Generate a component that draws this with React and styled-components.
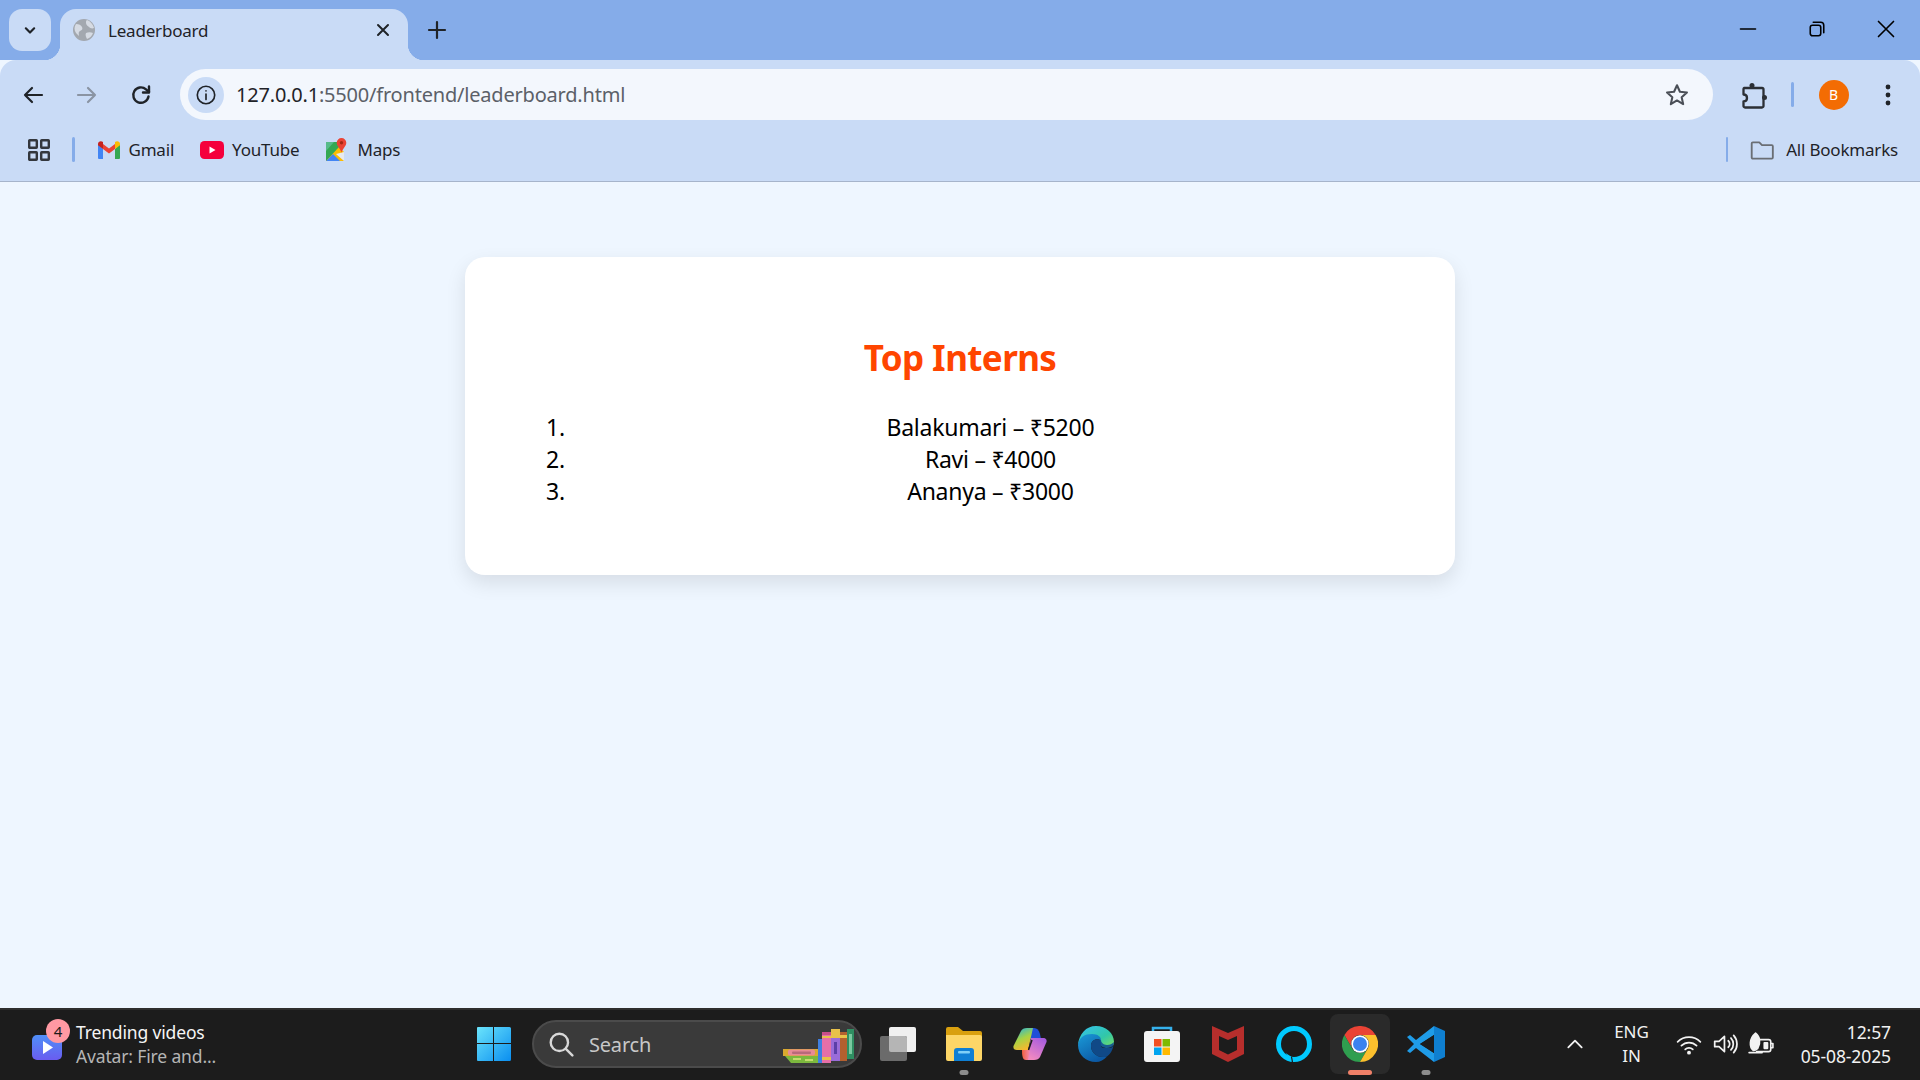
import React from "react";
import styled, { createGlobalStyle } from "styled-components";

const Global = createGlobalStyle`
  html, body { margin: 0; padding: 0; }
  body { font-family: "Noto Sans", "Open Sans", sans-serif; }
`;

const Screen = styled.div`
  width: 1920px;
  height: 1080px;
  display: flex;
  flex-direction: column;
  overflow: hidden;
  background: #eef6ff;
`;

const TabStrip = styled.div`
  height: 60px;
  flex: none;
  background: #85ace9;
  display: flex;
  align-items: flex-end;
  padding-left: 9px;
`;

const TabMenu = styled.div`
  width: 42px;
  height: 42px;
  margin-bottom: 9px;
  border-radius: 13px;
  background: #c9dbf6;
  display: flex;
  align-items: center;
  justify-content: center;
`;

const Tab = styled.div`
  position: relative;
  width: 348px;
  height: 51px;
  margin-left: 9px;
  box-sizing: border-box;
  padding: 0 15px 9px 13px;
  background: #c9dbf6;
  border-radius: 16px 16px 0 0;
  display: flex;
  align-items: center;
  &::before, &::after {
    content: "";
    position: absolute;
    bottom: 0;
    width: 16px;
    height: 16px;
  }
  &::before {
    left: -16px;
    background: radial-gradient(circle at 0 0, transparent 16px, #c9dbf6 16.5px);
  }
  &::after {
    right: -16px;
    background: radial-gradient(circle at 100% 0, transparent 16px, #c9dbf6 16.5px);
  }
`;

const TabTitle = styled.span`
  flex: 1;
  margin-left: 13px;
  padding-top: 1px;
  font-size: 17px;
  letter-spacing: -0.2px;
  color: #1f2328;
`;

const NewTab = styled.div`
  margin: 0 0 18px 17px;
  height: 24px;
  display: flex;
`;

const WindowControls = styled.div`
  margin-left: auto;
  height: 60px;
  display: flex;
  align-items: center;
  padding: 0 25px 0 0;
  gap: 51px;
  svg { margin-bottom: 2px; }
`;

const Toolbar = styled.div`
  height: 60px;
  flex: none;
  box-sizing: border-box;
  background: #c9dbf6;
  border-radius: 16px 16px 0 0;
  display: flex;
  align-items: flex-start;
  padding: 9px 0 0 21px;
`;

const NavButton = styled.div`
  width: 24px;
  height: 51px;
  margin-right: 30px;
  display: flex;
  align-items: center;
  justify-content: center;
  &:nth-child(3) { margin-right: 27px; }
`;

const Omnibox = styled.div`
  width: 1533px;
  height: 51px;
  box-sizing: border-box;
  border-radius: 26px;
  background: #f3f7fd;
  display: flex;
  align-items: center;
  padding: 0 23px 0 8px;
`;

const InfoChip = styled.div`
  width: 36px;
  height: 36px;
  border-radius: 50%;
  background: #c9dbf6;
  display: flex;
  align-items: center;
  justify-content: center;
`;

const Url = styled.div`
  flex: 1;
  margin-left: 12px;
  font-size: 20px;
  letter-spacing: -0.2px;
  color: #5b6068;
  span { color: #1f2328; }
`;

const ToolbarEnd = styled.div`
  height: 51px;
  display: flex;
  align-items: center;
  margin-left: 26px;
`;

const Spacer = styled.div`
  width: ${({ $w }) => $w}px;
  flex: none;
`;

const Divider = styled.div`
  width: 2.5px;
  height: ${({ $h }) => $h}px;
  border-radius: 2px;
  background: #85ace9;
`;

const Avatar = styled.div`
  width: 30px;
  height: 30px;
  margin: 0 36px 0 25px;
  border-radius: 50%;
  background: #f36c03;
  color: #fff;
  font-size: 14px;
  display: flex;
  align-items: center;
  justify-content: center;
`;

const BookmarkBar = styled.div`
  height: 62px;
  flex: none;
  box-sizing: border-box;
  background: #c9dbf6;
  border-bottom: 1px solid #a6b4cb;
  display: flex;
  align-items: center;
  padding: 0 22px 2px 28px;
`;

const Bookmark = styled.div`
  display: flex;
  align-items: center;
  gap: ${({ $gap }) => $gap}px;
  margin-left: ${({ $left }) => $left}px;
  font-size: 17px;
  letter-spacing: -0.2px;
  color: #1f2328;
`;

const Page = styled.main`
  flex: 1;
  display: flex;
  flex-direction: column;
  align-items: center;
  padding-top: 75px;
  background: #eef6ff;
`;

const Card = styled.section`
  width: 990px;
  height: 318px;
  box-sizing: border-box;
  padding: 77px 39px 0 81px;
  background: #fff;
  border-radius: 20px;
  box-shadow: 0 8px 20px rgba(0, 0, 0, 0.1);
`;

const Title = styled.h2`
  margin: 0 0 29px -42px;
  height: 48px;
  line-height: 48px;
  text-align: center;
  font-size: 35px;
  font-weight: 700;
  letter-spacing: -0.6px;
  color: #ff4500;
`;

const List = styled.ol`
  margin: 0;
  padding: 0;
  list-style: none;
  counter-reset: rank;
`;

const Row = styled.li`
  counter-increment: rank;
  display: flex;
  height: 32px;
  line-height: 32px;
  font-size: 23px;
  letter-spacing: -0.25px;
  color: #000;
  &::before { content: counter(rank) "."; }
`;

const RowText = styled.span`
  flex: 1;
  text-align: center;
`;

const Taskbar = styled.footer`
  height: 72px;
  flex: none;
  box-sizing: border-box;
  background: #1c1c1c;
  border-top: 2px solid #2e2e2e;
  padding-bottom: 2px;
  display: flex;
  align-items: center;
`;

const Widget = styled.div`
  position: relative;
  width: 461px;
  height: 100%;
  flex: none;
  box-sizing: border-box;
  padding-left: 32px;
  display: flex;
  align-items: center;
`;

const WidgetBadge = styled.div`
  position: absolute;
  left: 46px;
  top: 9px;
  width: 24px;
  height: 24px;
  border-radius: 50%;
  background: #ff99a3;
  color: #1a1a1a;
  font-size: 15px;
  display: flex;
  align-items: center;
  justify-content: center;
`;

const WidgetText = styled.div`
  margin-left: 14px;
  font-size: 17.5px;
  line-height: 24px;
  letter-spacing: -0.15px;
  color: #f5f5f5;
  div + div { color: #b5b5b5; }
`;

const Slot = styled.div`
  position: relative;
  width: 66px;
  height: 60px;
  flex: none;
  display: flex;
  align-items: center;
  justify-content: center;
  border-radius: 8px;
  box-sizing: border-box;
  background: ${({ $active }) => ($active ? "#2a2a2a" : "transparent")};
  ${({ $active }) => ($active ? "width: 60px; margin: 0 3px;" : "")}
`;

const RunDot = styled.span`
  position: absolute;
  bottom: -1px;
  left: 50%;
  transform: translateX(-50%);
  width: ${({ $active }) => ($active ? 24 : 9)}px;
  height: 5px;
  border-radius: 3px;
  background: ${({ $active }) => ($active ? "#f08068" : "#8c8c8c")};
`;

const SearchPill = styled.div`
  width: 330px;
  height: 48px;
  flex: none;
  margin: 0 2.5px 0 5px;
  box-sizing: border-box;
  border-radius: 24px;
  border: 2px solid #4b4b4b;
  background: #3a3a3a;
  display: flex;
  align-items: center;
  padding-left: 14px;
  overflow: hidden;
  color: #c8c8c8;
  font-size: 20px;
  letter-spacing: -0.2px;
`;

const SearchLabel = styled.span`
  margin-left: 15px;
  flex: 1;
`;

const Tray = styled.div`
  flex: 1;
  height: 100%;
  display: flex;
  align-items: center;
  color: #f2f2f2;
  padding-left: 106px;
`;

const Lang = styled.div`
  width: 60px;
  margin-left: 17px;
  text-align: center;
  font-size: 17px;
  line-height: 24px;
`;

const TrayIcons = styled.div`
  display: flex;
  align-items: center;
  gap: 10px;
  margin-left: 14px;
`;

const Clock = styled.div`
  margin-left: auto;
  margin-right: 29px;
  text-align: right;
  font-size: 17.5px;
  line-height: 24px;
  letter-spacing: -0.1px;
`;

const Stroke = ({ size = 24, color = "#1f2328", width = 2, children }) => (
  <svg width={size} height={size} viewBox="0 0 24 24" fill="none" stroke={color} strokeWidth={width} strokeLinecap="round" strokeLinejoin="round">
    {children}
  </svg>
);

const Gmail = () => (
  <svg width="24" height="20" viewBox="0 0 24 20">
    <path d="M1 4v14a1 1 0 0 0 1 1h4V9z" fill="#4285f4" />
    <path d="M23 4v14a1 1 0 0 1-1 1h-4V9z" fill="#34a853" />
    <path d="M6 9v-5l6 4.6 6-4.6v5l-6 4.6z" fill="#ea4335" />
    <path d="M1 4c0-2.6 3-3.6 5-2v7L1 5.2z" fill="#c5221f" />
    <path d="M23 4c0-2.6-3-3.6-5-2v7l5-3.8z" fill="#fbbc04" />
  </svg>
);

const YouTube = () => (
  <svg width="24" height="18" viewBox="0 0 24 18">
    <rect width="24" height="18" rx="4.5" fill="#f5003c" />
    <path d="M9.5 5.5v7l6-3.5z" fill="#fff" />
  </svg>
);

const Maps = () => (
  <svg width="22" height="24" viewBox="0 0 22 24">
    <path d="M1 4h13v19H1z" fill="#34a853" />
    <path d="M1 23 14 9l5 5v9z" fill="#fbbc04" />
    <path d="M1 23 8 16l7 7z" fill="#4285f4" />
    <path d="M11 16l8 7V14z" fill="#e8eaed" />
    <path d="M1 4h8L1 13z" fill="#57bb8a" />
    <path d="M16.5 0a4.8 4.8 0 0 1 4.8 4.8c0 3.4-3.8 5.8-4.8 10-1-4.200-4.800-6.600-4.800-10A4.800 4.800 0 0 1 16.500 0z" fill="#ea4335" />
    <circle cx="16.500" cy="4.800" r="1.700" fill="#a52714" />
  </svg>
);

const WinLogo = () => (
  <svg width="36" height="36" viewBox="0 0 36 36">
    <defs>
      <linearGradient id="winGrad" x1="0" y1="0" x2="1" y2="1">
        <stop offset="0" stopColor="#6be4fb" />
        <stop offset="1" stopColor="#0a8ef0" />
      </linearGradient>
    </defs>
    <path d="M1 2a1 1 0 0 1 1-1h15v16H1zM18 1h15.500a1.500 1.500 0 0 1 1.500 1.500V17H18zM1 18h16v17H2a1 1 0 0 1-1-1zM18 18h17v15.500a1.500 1.500 0 0 1-1.500 1.500H18z" fill="url(#winGrad)" />
  </svg>
);

const Books = () => (
  <svg width="74" height="34" viewBox="0 0 74 34" style={{ flex: "none", marginRight: 3, marginTop: 3 }}>
    <rect x="0" y="20" width="35" height="7" fill="#d9a92f" />
    <rect x="5" y="20.500" width="27" height="6" rx="2" fill="#e88a96" />
    <rect x="9" y="22.500" width="19" height="2.500" rx="1" fill="#b9697a" />
    <path d="M2 27h33v7H8z" fill="#7cb83e" />
    <path d="M10 29h8v2h-8zM22 30h8v2h-8z" fill="#c3dc6e" />
    <rect x="35" y="10" width="4" height="24" fill="#3f7fe0" />
    <rect x="39" y="3" width="9" height="31" fill="#e56fa8" />
    <rect x="39" y="3" width="9" height="3" fill="#c94f88" />
    <rect x="39" y="7" width="9" height="2" fill="#e8c14a" />
    <rect x="39" y="28" width="9" height="3" fill="#e8c14a" />
    <rect x="48" y="0" width="9" height="32" fill="#9a6cd8" />
    <rect x="48" y="0" width="9" height="9" fill="#e8c14a" />
    <rect x="51" y="13" width="3" height="12" fill="#5b3fa8" />
    <rect x="57" y="3" width="7" height="29" fill="#b3602f" />
    <rect x="57" y="6" width="7" height="3" fill="#e8c14a" />
    <rect x="64" y="0" width="7" height="30" fill="#2f8f62" />
    <rect x="66" y="5" width="3" height="20" fill="#7bc8a0" />
  </svg>
);

const TaskView = () => (
  <svg width="36" height="36" viewBox="0 0 36 36">
    <rect x="9" y="1" width="27" height="25" rx="2" fill="#f0f0f0" />
    <rect x="0" y="10" width="27" height="25" rx="2" fill="#6b6b6b" />
    <path d="M9 10h16a2 2 0 0 1 2 2v14H11a2 2 0 0 1-2-2z" fill="#b5b5b5" />
  </svg>
);

const Explorer = () => (
  <svg width="36" height="36" viewBox="0 0 36 36">
    <path d="M0 3a2 2 0 0 1 2-2h10l5 4h17a2 2 0 0 1 2 2v4H0z" fill="#d9a00f" />
    <path d="M0 9h34a2 2 0 0 1 2 2v22a2 2 0 0 1-2 2H2a2 2 0 0 1-2-2z" fill="#fdd667" />
    <path d="M8 25a3 3 0 0 1 3-3h14a3 3 0 0 1 3 3v10H8z" fill="#0f7fd4" />
    <rect x="12" y="25" width="12" height="2.500" rx="1" fill="#7fd0f7" />
  </svg>
);

const Copilot = () => (
  <svg width="34" height="32" viewBox="0 0 34 32">
    <defs>
      <linearGradient id="copA" x1="0.2" y1="0" x2="0.6" y2="1">
        <stop offset="0" stopColor="#2bb5d6" />
        <stop offset="0.5" stopColor="#a7d344" />
        <stop offset="1" stopColor="#fbb62e" />
      </linearGradient>
      <linearGradient id="copB" x1="0.8" y1="0" x2="0.3" y2="1">
        <stop offset="0" stopColor="#a65be0" />
        <stop offset="1" stopColor="#f28ac0" />
      </linearGradient>
      <linearGradient id="copC" x1="0" y1="0" x2="1" y2="0">
        <stop offset="0" stopColor="#f2603f" />
        <stop offset="1" stopColor="#f48ab0" />
      </linearGradient>
    </defs>
    <path d="M15 0h6c3 0 5 2 6 6l1 5H17z" fill="#1f4fd8" />
    <path d="M8 3c1-2 3-3 6-3h6l-5 22H4c-3 0-4-2-3.500-4z" fill="url(#copA)" />
    <path d="M18 10h12c3 0 4 2 3.500 4L27 29c-1 2-3 3-6 3h-7z" fill="url(#copB)" />
    <path d="M9 22h8l-2 10h-2c-3 0-4-3-4-10z" fill="url(#copC)" />
    <path d="M19 12l-3.500 10" stroke="#1c1c1c" strokeWidth="1.500" fill="none" />
  </svg>
);

const Edge = () => (
  <svg width="36" height="36" viewBox="0 0 36 36">
    <defs>
      <linearGradient id="edgeA" x1="0" y1="0" x2="1" y2="1">
        <stop offset="0" stopColor="#35c1f1" />
        <stop offset="0.6" stopColor="#31c7a8" />
        <stop offset="1" stopColor="#7fe05a" />
      </linearGradient>
      <linearGradient id="edgeB" x1="0" y1="0" x2="0.6" y2="1">
        <stop offset="0" stopColor="#1a9ad8" />
        <stop offset="1" stopColor="#0c59a4" />
      </linearGradient>
    </defs>
    <path d="M18 0c10 0 18 7 18 16 0 4-3 6-7 6-3 0-6-1-6-3 0-5-2-9-8-9-7 0-13 4-15 9C1 8 8 0 18 0z" fill="url(#edgeA)" />
    <path d="M0 19C1 11 7 8 14 8c6 0 9 3 9 6-5-2-10 0-10 6 0 6 5 11 12 11 2 0 3 0 4-.500C26 34 22 36 18 36 8 36 0 29 0 19z" fill="url(#edgeB)" />
    <path d="M13 20c0-6 5-8 10-6 0 2 2 5 6 5 3 0 5-1 7-3-1 9-4 12-7 14.500-1 .500-2 .500-4 .500-7 0-12-5-12-11z" fill="#0f4f94" opacity="0.9" />
    <path d="M23 19c0 2 3 3 6 3 3 0 5-1 6.500-3-.500 1-2 3-3.500 3h-6c-2 0-3-1-3-3z" fill="#1c1c1c" />
  </svg>
);

const Store = () => (
  <svg width="36" height="36" viewBox="0 0 36 36">
    <path d="M9 6V2h18v4" fill="none" stroke="#35b1ec" strokeWidth="2.500" />
    <rect x="0" y="5" width="36" height="31" rx="3" fill="#f4f4f4" />
    <rect x="10" y="13" width="7.500" height="7.500" fill="#f25022" />
    <rect x="18.500" y="13" width="7.500" height="7.500" fill="#7fba00" />
    <rect x="10" y="21.500" width="7.500" height="7.500" fill="#00a4ef" />
    <rect x="18.500" y="21.500" width="7.500" height="7.500" fill="#ffb900" />
  </svg>
);

const McAfee = () => (
  <svg width="32" height="36" viewBox="0 0 32 36">
    <path d="M0 0l16 7 16-7v28l-16 8-16-8zM7 10v14l9 4.500 9-4.500V10l-9 4z" fill="#b72e2c" fillRule="evenodd" />
  </svg>
);

const Alexa = () => (
  <svg width="36" height="36" viewBox="0 0 36 36">
    <circle cx="18" cy="18" r="15.500" fill="none" stroke="#00caff" strokeWidth="5" />
    <path d="M15 36v-5.500l-5.500-3.500 3 5z" fill="#00caff" />
    <path d="M15.500 31l1 5" stroke="#1c1c1c" strokeWidth="1.200" />
  </svg>
);

const Chrome = () => (
  <svg width="36" height="36" viewBox="0 0 36 36">
    <path d="M18 9H33.600A18 18 0 0 0 2.400 9L10.200 22.500A9 9 0 0 1 18 9z" fill="#ea4335" />
    <path d="M2.400 9A18 18 0 0 0 18 36L25.800 22.500A9 9 0 0 1 10.200 22.500z" fill="#2f9e4f" />
    <path d="M33.600 9H18A9 9 0 0 1 25.800 22.500L18 36A18 18 0 0 0 33.600 9z" fill="#fbc02d" />
    <circle cx="18" cy="18" r="8.700" fill="#fff" />
    <circle cx="18" cy="18" r="7" fill="#3b82f0" />
  </svg>
);

const VSCode = () => (
  <svg width="38" height="36" viewBox="0 0 38 36">
    <path d="M27 0l11 5v26l-11 5z" fill="#0f7fd0" />
    <path d="M27 0v9L13 18l14 9v9L9 22l-6 5-3-2 7-7-7-7 3-2 6 5z" fill="#1f9ce8" />
    <path d="M27 9v18l-14-9z" fill="#1c1c1c" />
  </svg>
);

function App() {
  return (
    <Screen>
      <Global />
      <TabStrip>
        <TabMenu>
          <Stroke size={20} width={2.6}>
            <path d="M7 10l5 5 5-5" />
          </Stroke>
        </TabMenu>
        <Tab>
          <svg width="22" height="22" viewBox="0 0 22 22">
            <circle cx="11" cy="11" r="11" fill="#a3a8af" />
            <path d="M3 5c3 0 5 1 6 3s0 3-2 4-1 3-1 5l-3-3C1 11 1 8 3 5zM14 1c3 1 6 4 7 8-2 1-4 0-5-1s-3-2-3-4 0-2 1-3zM13 14c2-1 5-1 7 0-1 3-3 5-6 6-1-2-2-4-1-6z" fill="#d6dbe3" />
          </svg>
          <TabTitle>Leaderboard</TabTitle>
          <Stroke size={20} width={2.4}>
            <path d="M6 6l12 12M18 6L6 18" />
          </Stroke>
        </Tab>
        <NewTab>
          <Stroke size={24} width={2.2}>
            <path d="M12 4v16M4 12h16" />
          </Stroke>
        </NewTab>
        <WindowControls>
          <Stroke size={18} color="#000" width={2.2}>
            <path d="M2 12h20" />
          </Stroke>
          <Stroke size={18} color="#000" width={2.1}>
            <rect x="3" y="7" width="14" height="14" rx="3" />
            <path d="M7 3h10a4 4 0 0 1 4 4v10" />
          </Stroke>
          <Stroke size={18} color="#000" width={2.2}>
            <path d="M2 2l20 20M22 2L2 22" />
          </Stroke>
        </WindowControls>
      </TabStrip>

      <Toolbar>
        <NavButton>
          <Stroke size={24} width={2.2}>
            <path d="M21 12H4M11 5l-7 7 7 7" />
          </Stroke>
        </NavButton>
        <NavButton>
          <Stroke size={24} width={2.2} color="#8a94a3">
            <path d="M3 12h17M13 5l7 7-7 7" />
          </Stroke>
        </NavButton>
        <NavButton>
          <Stroke size={24} width={2.4}>
            <path d="M19.500 13.500A7.700 7.700 0 1 1 17 6.300L20 9" />
            <path d="M20 3.500V9.500h-6" />
          </Stroke>
        </NavButton>
        <Omnibox>
          <InfoChip>
            <Stroke size={22} width={1.8}>
              <circle cx="12" cy="12" r="9.500" />
              <path d="M12 11v6M12 7.500v.1" />
            </Stroke>
          </InfoChip>
          <Url>
            <span>127.0.0.1</span>:5500/frontend/leaderboard.html
          </Url>
          <Stroke size={26} width={1.9} color="#4a4f57">
            <path d="M12 3l2.700 6 6.500.7-4.900 4.300 1.400 6.400L12 17l-5.700 3.400 1.400-6.400-4.900-4.300 6.500-.7z" />
          </Stroke>
        </Omnibox>
        <ToolbarEnd>
          <svg width="28" height="28" viewBox="0 0 28 28" fill="none" stroke="#2b2f35" strokeWidth="2.300" strokeLinejoin="round">
            <path d="M5 7h18a1.500 1.500 0 0 1 1.500 1.500V25a1.500 1.500 0 0 1-1.500 1.500H6a1.500 1.500 0 0 1-1.500-1.500V20.500c2.500 0 3.500-1.500 3.500-3.500s-1-3.500-3.500-3.500V8A1 1 0 0 1 5 7z" />
            <circle cx="13" cy="4.500" r="2.500" fill="#2b2f35" stroke="none" />
            <circle cx="25.500" cy="16.500" r="2.500" fill="#2b2f35" stroke="none" />
          </svg>
          <Spacer $w={24} />
          <Divider $h={25} />
          <Avatar>B</Avatar>
          <svg width="6" height="24" viewBox="0 0 6 24">
            <circle cx="3" cy="4" r="2.400" fill="#1f2328" />
            <circle cx="3" cy="12" r="2.400" fill="#1f2328" />
            <circle cx="3" cy="20" r="2.400" fill="#1f2328" />
          </svg>
        </ToolbarEnd>
      </Toolbar>

      <BookmarkBar>
        <svg width="22" height="22" viewBox="0 0 22 22" fill="none" stroke="#33373d" strokeWidth="2.400">
          <rect x="1.200" y="1.200" width="7.600" height="7.600" rx="0.500" />
          <rect x="13.200" y="1.200" width="7.600" height="7.600" rx="0.500" />
          <rect x="1.200" y="13.200" width="7.600" height="7.600" rx="0.500" />
          <rect x="13.200" y="13.200" width="7.600" height="7.600" rx="0.500" />
        </svg>
        <Spacer $w={22} />
        <Divider $h={25} />
        <Bookmark $left={22} $gap={8}>
          <Gmail />
          Gmail
        </Bookmark>
        <Bookmark $left={26} $gap={8}>
          <YouTube />
          YouTube
        </Bookmark>
        <Bookmark $left={26} $gap={10}>
          <Maps />
          Maps
        </Bookmark>
        <Spacer style={{ flex: 1 }} />
        <Divider $h={25} />
        <Bookmark $left={21} $gap={11}>
          <Stroke size={26} width={1.7} color="#6a6e74">
            <path d="M2.500 6a1 1 0 0 1 1-1h6l2.500 2.500h9a1 1 0 0 1 1 1V19a1 1 0 0 1-1 1H3.500a1 1 0 0 1-1-1z" />
          </Stroke>
          All Bookmarks
        </Bookmark>
      </BookmarkBar>

      <Page>
        <Card>
          <Title>Top Interns</Title>
          <List>
            <Row><RowText>Balakumari – ₹5200</RowText></Row>
            <Row><RowText>Ravi – ₹4000</RowText></Row>
            <Row><RowText>Ananya – ₹3000</RowText></Row>
          </List>
        </Card>
      </Page>

      <Taskbar>
        <Widget>
          <svg width="30" height="26" viewBox="0 0 30 26" style={{ marginTop: 8 }}>
            <defs>
              <linearGradient id="vidGrad" x1="0" y1="0" x2="0" y2="1">
                <stop offset="0" stopColor="#4f8ff7" />
                <stop offset="1" stopColor="#6a5cf0" />
              </linearGradient>
            </defs>
            <rect width="30" height="25" rx="5" fill="url(#vidGrad)" />
            <path d="M11 6v13l10-6.500z" fill="#fff" />
          </svg>
          <WidgetBadge>4</WidgetBadge>
          <WidgetText>
            <div>Trending videos</div>
            <div>Avatar: Fire and...</div>
          </WidgetText>
        </Widget>
        <Slot><WinLogo /></Slot>
        <SearchPill>
          <Stroke size={26} color="#d8d8d8" width={2.200}>
            <circle cx="10.500" cy="10.500" r="8" />
            <path d="M16.500 16.500l6 6" />
          </Stroke>
          <SearchLabel>Search</SearchLabel>
          <Books />
        </SearchPill>
        <Slot><TaskView /></Slot>
        <Slot><Explorer /><RunDot /></Slot>
        <Slot><Copilot /></Slot>
        <Slot><Edge /></Slot>
        <Slot><Store /></Slot>
        <Slot><McAfee /></Slot>
        <Slot><Alexa /></Slot>
        <Slot $active><Chrome /><RunDot $active /></Slot>
        <Slot><VSCode /><RunDot /></Slot>
        <Tray>
          <Stroke size={20} color="#f2f2f2" width={2.200}>
            <path d="M4 16l8-8 8 8" />
          </Stroke>
          <Lang>ENG<br />IN</Lang>
          <TrayIcons>
            <Stroke size={26} color="#f2f2f2" width={1.600}>
              <path d="M1.500 10a15 15 0 0 1 21 0M5 13.500a10 10 0 0 1 14 0M8.500 17a5 5 0 0 1 7 0" />
              <circle cx="12" cy="20" r="1" fill="#f2f2f2" />
            </Stroke>
            <Stroke size={26} color="#f2f2f2" width={1.600}>
              <path d="M2.500 9.500v5h4l5 4.500V5l-5 4.500zM15 9a4 4 0 0 1 0 6M17.500 6.500a8 8 0 0 1 0 11M20 4a12 12 0 0 1 0 16" />
            </Stroke>
            <Stroke size={26} color="#f2f2f2" width={1.500}>
              <path d="M10 8h9a2 2 0 0 1 2 2v7a2 2 0 0 1-2 2H8M21 11.500h2v4h-2M1 20h12" />
              <path d="M7 2c4 3 5 9 2 14-1 1-3 2-4 2-4-3-4-11 2-16z" fill="#f2f2f2" />
              <path d="M15 11v5h3v-5z" fill="#f2f2f2" />
            </Stroke>
          </TrayIcons>
          <Clock>
            <div>12:57</div>
            <div>05-08-2025</div>
          </Clock>
        </Tray>
      </Taskbar>
    </Screen>
  );
}

export default App;
